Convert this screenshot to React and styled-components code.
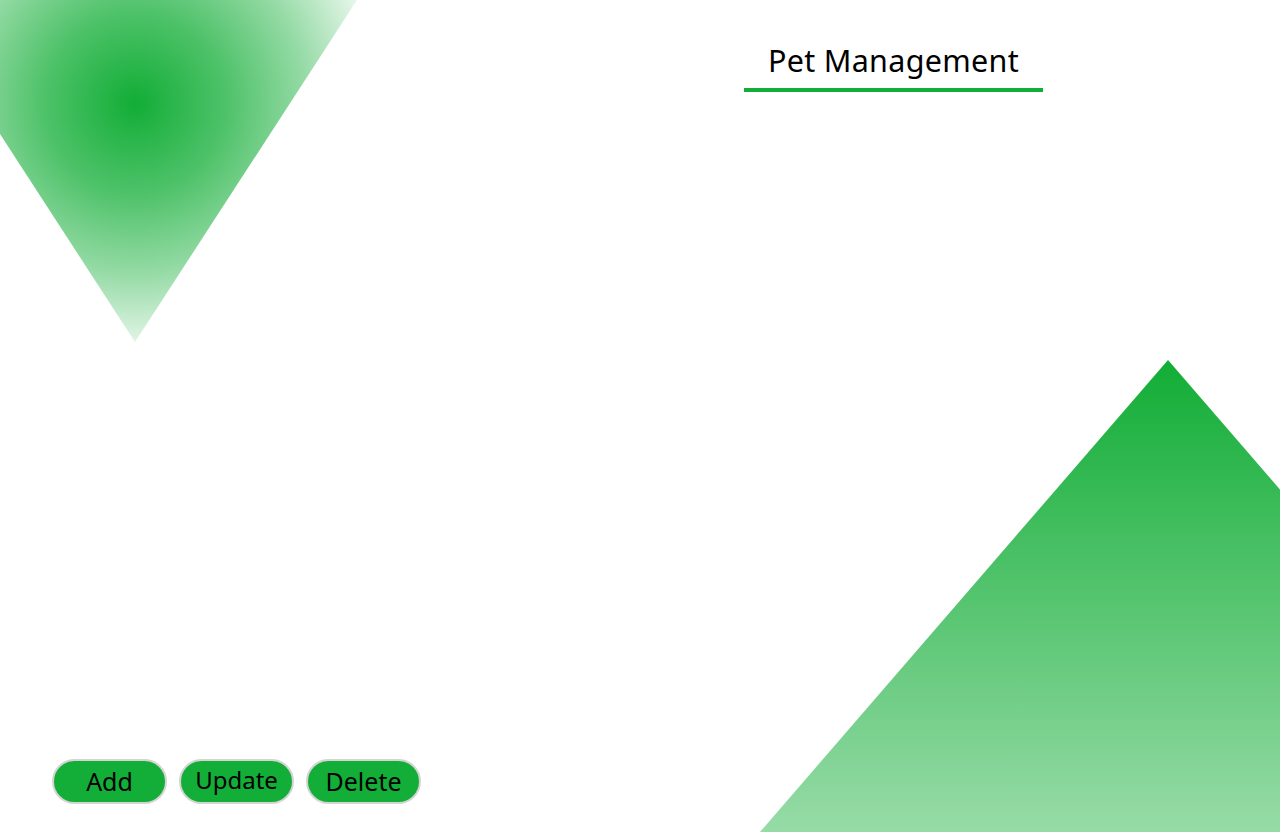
import React from 'react'
import styled, { createGlobalStyle } from 'styled-components';

const GlobalStyle = createGlobalStyle`
html, body, #root {
  margin: 0;
  height: 100%;
}
body {
  background: #ffffff;
  font-family: "Noto Sans", "Open Sans", sans-serif;
  overflow: hidden;
}
* { box-sizing: border-box; }
`;

const Page = styled.div`
position: relative;
width: 100%;
height: 100vh;
display: flex;
flex-direction: column;
justify-content: space-between;
overflow: hidden;
`;

/* decorative triangles behind content */
const TopTriangle = styled.div`
position: absolute;
left: -87px;
top: 0;
width: 444px;
height: 342px;
clip-path: polygon(0 0, 100% 0, 50% 100%);
background: radial-gradient(circle at 222px 103px,
  rgba(18, 173, 54, 1) 0px,
  rgba(18, 173, 54, 0.75) 90px,
  rgba(18, 173, 54, 0.45) 170px,
  rgba(18, 173, 54, 0.12) 240px,
  rgba(18, 173, 54, 0) 275px);
z-index: 0;
`;

const BottomTriangle = styled.div`
position: absolute;
left: 760px;
bottom: 0;
width: 816px;
height: 472px;
clip-path: polygon(50% 0, 100% 100%, 0 100%);
background: linear-gradient(to bottom, rgba(18, 173, 54, 1), rgba(18, 173, 54, 0.44));
z-index: 0;
`;

const Header = styled.header`
position: relative;
z-index: 1;
display: flex;
justify-content: flex-end;
padding: 38px 237px 0 0;
`;

const Title = styled.h1`
margin: 0;
width: 299px;
padding-bottom: 6px;
border-bottom: 4px solid #12ae38;
text-align: center;
font-size: 30.5px;
font-weight: 400;
letter-spacing: 0.3px;
color: #000;
line-height: 44px;
`;

const Toolbar = styled.div`
position: relative;
z-index: 1;
display: flex;
gap: 12px;
padding: 0 0 28px 52px;
`;

const ActionButton = styled.button`
width: 115px;
height: 45px;
border: 2px solid #d4d4d4;
border-radius: 23px;
background: #12ae38;
color: #000;
font-family: "Noto Sans", "Open Sans", sans-serif;
font-size: ${p => p.$small ? '24px' : '25px'};
padding: ${p => p.$small ? '0 0 4px' : '0'};
line-height: 1;
cursor: pointer;
`;

const App = () => {
    return (
        <>
            <GlobalStyle />
            <Page>
                <TopTriangle />
                <BottomTriangle />
                <Header>
                    <Title>Pet Management</Title>
                </Header>
                <Toolbar>
                    <ActionButton>Add</ActionButton>
                    <ActionButton $small>Update</ActionButton>
                    <ActionButton>Delete</ActionButton>
                </Toolbar>
            </Page>
        </>
    )
}

export default App
